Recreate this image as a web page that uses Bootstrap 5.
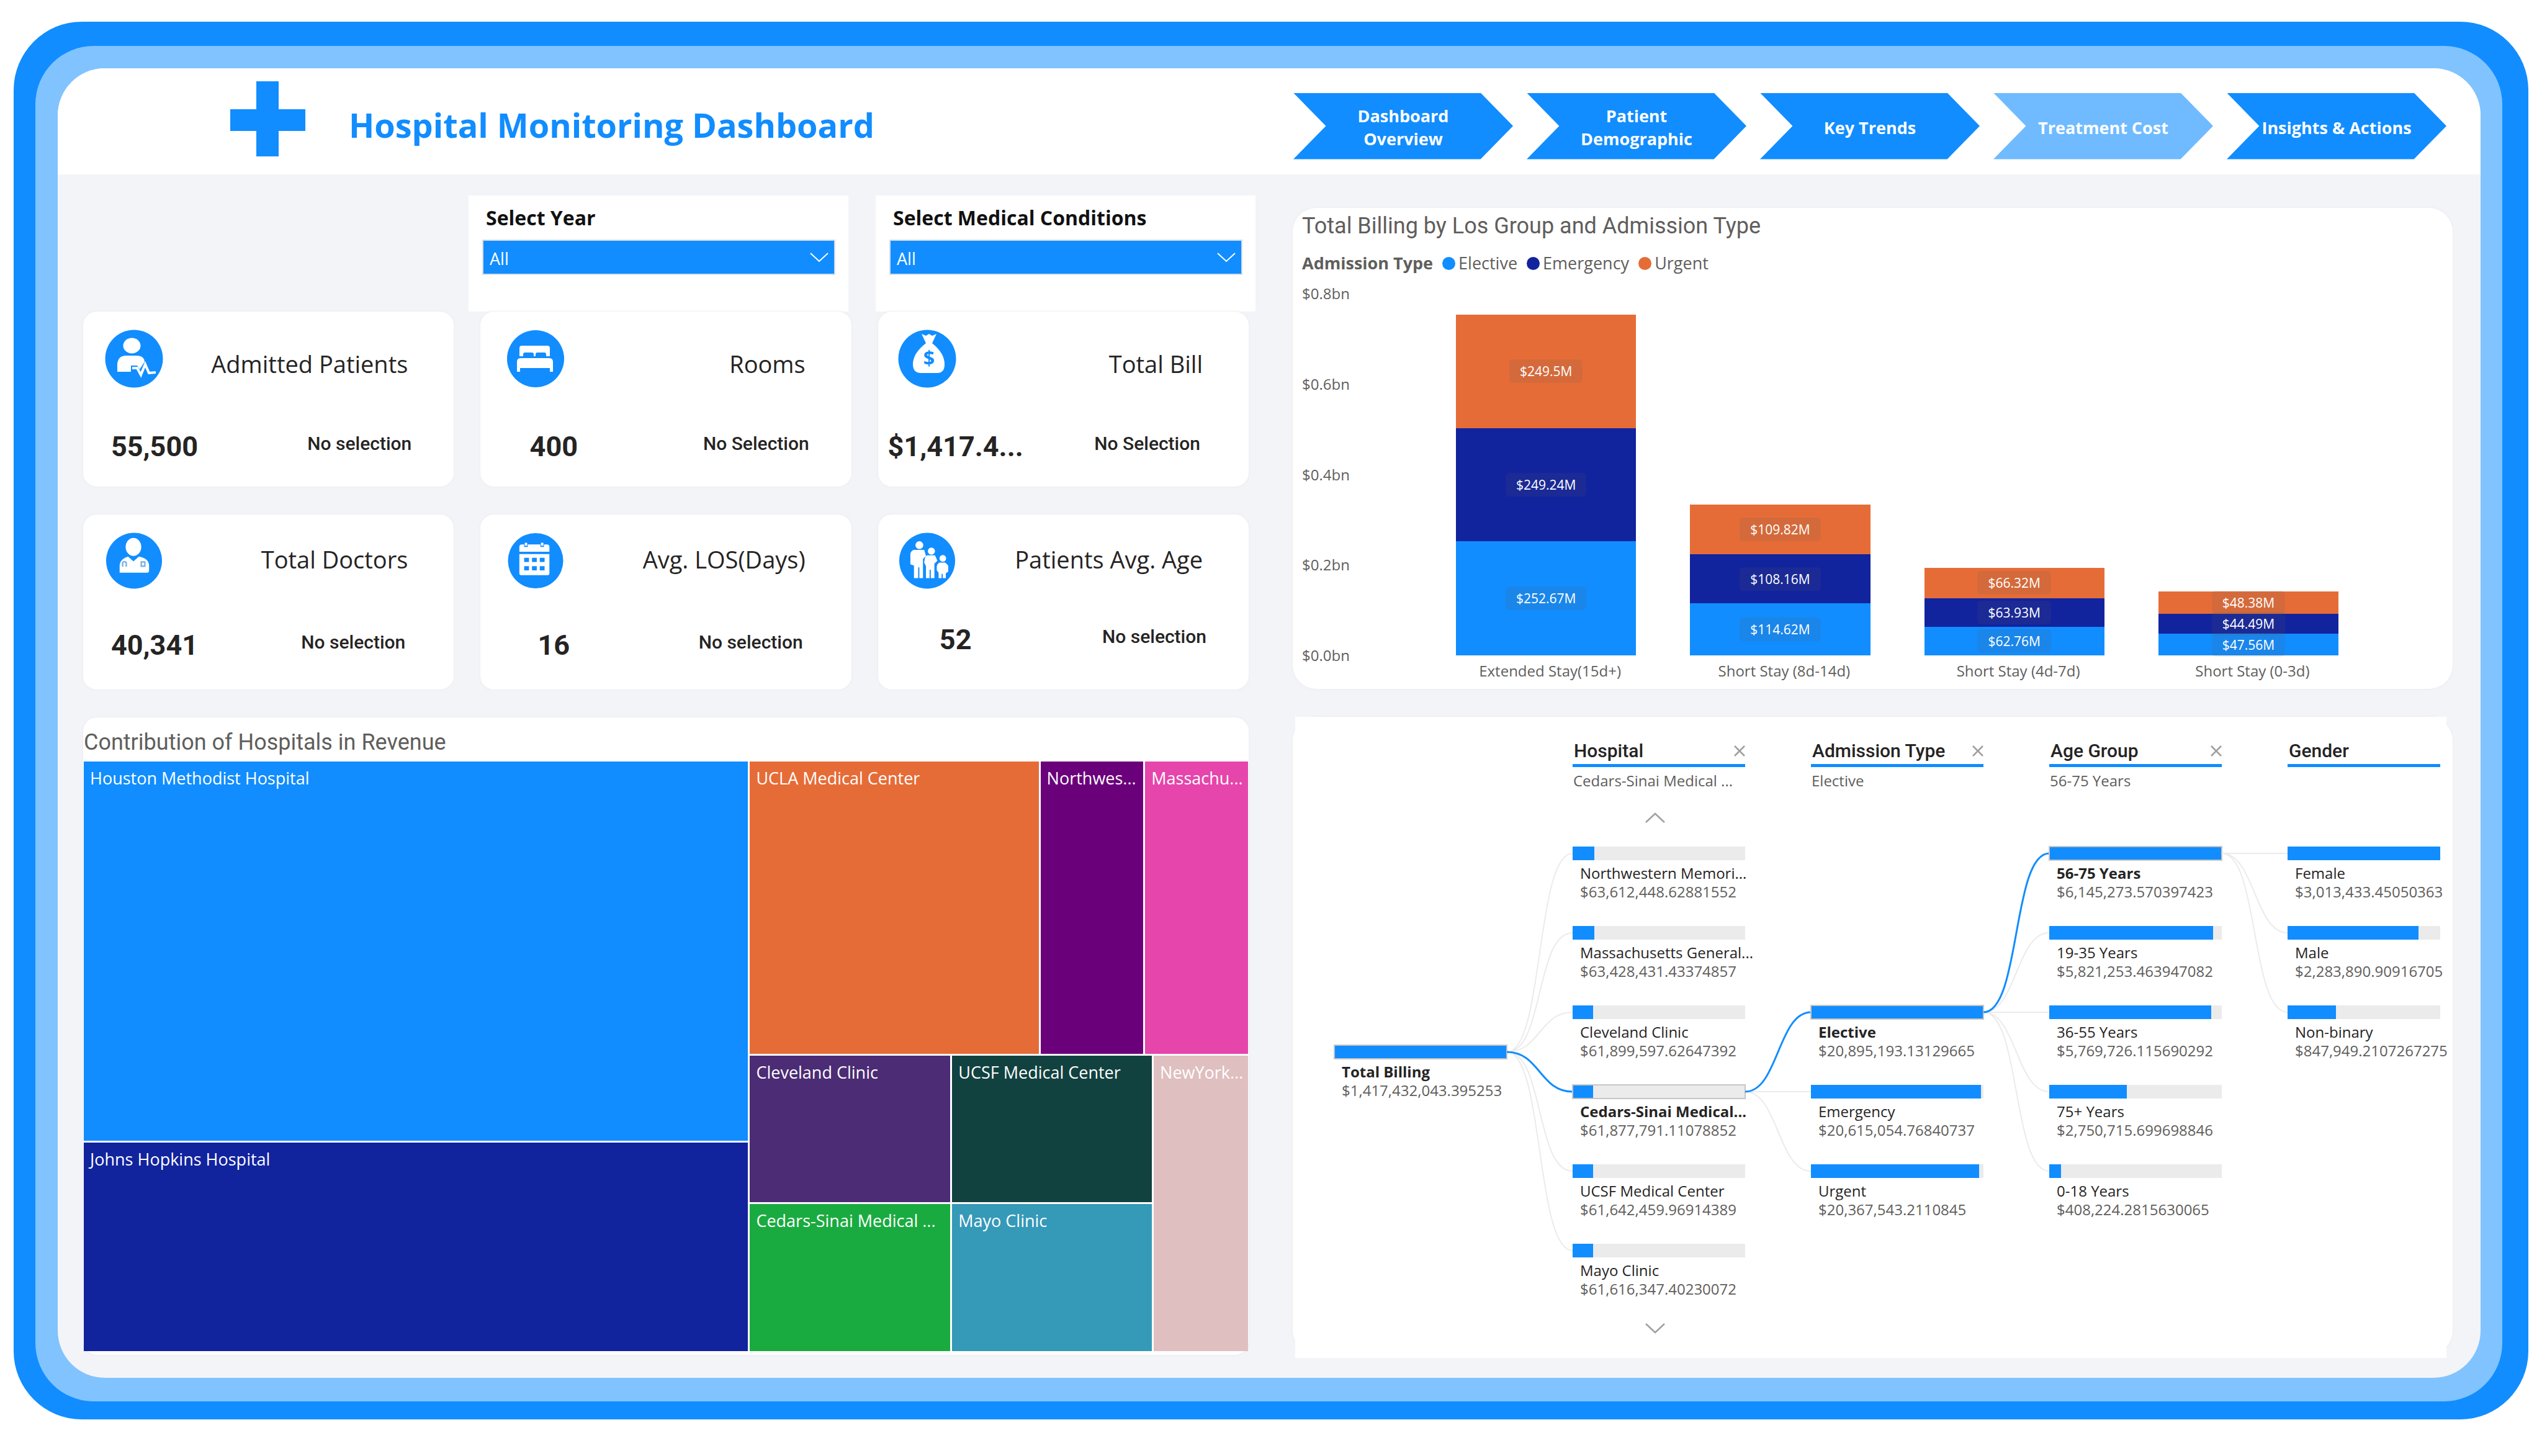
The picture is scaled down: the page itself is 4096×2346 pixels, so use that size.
<!DOCTYPE html>
<html lang="en">
<head>
<meta charset="utf-8">
<meta name="viewport" content="width=device-width, initial-scale=1">
<title>Hospital Monitoring Dashboard</title>
<link href="https://cdn.jsdelivr.net/npm/bootstrap@5.3.0/dist/css/bootstrap.min.css" rel="stylesheet">
<style>
  :root { --blue:#118dff; --sky:#80c3ff; --navy:#12239e; --orange:#e66c37; --page:#f3f4f8; --ink:#252423; --soft:#605e5c; }
  body { font-family:"Open Sans","Noto Sans",sans-serif; color:var(--ink); background:#fff; font-size:24px; line-height:30px; }
  .din { font-family:Roboto,"Noto Sans",sans-serif; }
  .frame-outer { margin:35px 22px 0; padding:39px 42px 29px 35px; border-radius:110px; background:var(--blue); }
  .frame-light { padding:36px 35px 38px 36px; border-radius:94px; background:var(--sky); }
  .frame-page { border-radius:76px; background:var(--page); overflow:hidden; }

  .top-head { height:171px; padding:0 55px 0 278px; }
  .brand-cross { width:121px; height:121px; margin-bottom:9px; }
  .brand-title { margin:10px 0 0 70px; font-size:54px; line-height:64px; font-weight:700; color:var(--blue); }
  .step-nav { gap:22px; margin-top:15px; }
  .step-link { width:354px; height:107px; padding-top:4px; background:var(--blue); color:#fff; font-size:27px; line-height:37px; font-weight:700; white-space:nowrap;
    clip-path:polygon(0 0,85.2% 0,100% 50%,85.2% 100%,0 100%,14.8% 50%); }
  .step-link.current { background:#70bbff; }

  .board { display:grid; grid-template-columns:minmax(0,1878fr) minmax(0,1869fr); column-gap:71px; padding:34px 45px 37px 41px; }
  .filters { gap:44px; margin:0 -11px 0 621px; }
  .filter-box { flex:1; height:187px; padding:14px 21px 0 22px; }
  .filter-box label { display:block; margin-left:6px; font-size:32px; line-height:44px; font-weight:700; color:#111; }
  .filter-box .form-select { height:57px; margin-top:13px; padding:4px 52px 0 10px; border:2px solid #d5dde6; border-radius:0; color:#fff; font-size:27px; line-height:36px; background-color:var(--blue); background-size:30px 16px; background-position:right 9px center;
    --bs-form-select-bg-img:url("data:image/svg+xml,%3Csvg xmlns='http://www.w3.org/2000/svg' viewBox='0 0 30 16'%3E%3Cpath d='M1 1l14 13L29 1' fill='none' stroke='%23fff' stroke-width='2'/%3E%3C/svg%3E"); }

  .kpi-grid { display:grid; grid-template-columns:repeat(3,1fr); gap:45px 43px; }
  .panel { background:#fff; border-radius:22px; box-shadow:0 0 3px 1px #ededf0; }
  .kpi { height:282px; padding-top:29px; --icon-left:35px; --num-box:230px; --note-right:78px; --name-top:31px; --foot-top:67px; }
  .kpi.col-b { --icon-left:42px; --num-box:236px; }
  .kpi.col-c { --icon-left:32px; --num-box:250px; }
  .kpi.note-wide { --note-right:68px; }
  .kpi.row-b { --name-top:19px; --foot-top:60px; }
  .kpi.row-b.raised { --foot-top:51px; }
  .kpi-icon { width:94px; height:94px; margin-left:var(--icon-left); }
  .kpi.row-b .kpi-icon { height:91px; margin-bottom:3px; }
  .kpi-name { margin:var(--name-top) 74px 0 0; font-size:38px; line-height:48px; white-space:nowrap; }
  .kpi-foot { margin-top:var(--foot-top); }
  .kpi-num { width:var(--num-box); text-align:center; font-size:45px; line-height:56px; font-weight:700; white-space:nowrap; }
  .kpi-note { margin:5px var(--note-right) 0 0; font-size:30px; line-height:36px; font-weight:500; }

  .panel-title { font-size:36px; line-height:40px; font-weight:400; color:var(--soft); margin:0; }
  .tree-map { height:1027px; margin-top:45px; padding:20px 1px 6px; }
  .tree-map .panel-title { height:51px; }
  .map-area { height:950px; gap:3px; }
  .map-area .d-flex { gap:3px; min-width:0; min-height:0; }
  .map-tile { overflow:hidden; min-width:0; min-height:0; }
  .map-tile span { display:block; padding:8px 10px; color:#fff; font-size:27px; line-height:38px; white-space:nowrap; }

  .right-side { padding-top:20px; }
  .chart-panel { height:775px; padding:9px 184px 0 15px; border-radius:38px; }
  .legend-row { margin-top:22px; height:36px; font-size:27px; line-height:36px; color:var(--soft); }
  .legend-dot { width:21px; height:21px; margin:0 5px 0 15px; border-radius:50%; }
  .plot { margin-top:15px; color:var(--soft); }
  .plot-axis { flex:0 0 248px; height:615px; line-height:32px; }
  .plot-bars { gap:87px; padding-top:16px; }
  .plot-col { flex:1 1 0; min-width:0; }
  .stack { height:583px; }
  .seg-tag { position:relative; padding:0 17px; border-radius:6px; font-size:21px; line-height:38px; color:#fff; background:rgba(96,94,92,.13); }
  .plot-cat { margin-top:8px; padding-left:13px; line-height:34px; text-align:center; white-space:nowrap; }
  .bg-e { background:var(--blue); } .bg-m { background:var(--navy); } .bg-u { background:var(--orange); }

  .decomp-under { height:1027px; border-radius:38px; margin-top:45px; }
  .decomp { height:1033px; margin:0 10px 0 4px; padding-left:63px; background:#fff; }
  .level { flex:0 0 278px; min-width:0; }
  .level-head { height:209px; padding-top:37px; }
  .level-name { padding:0 0 3px 2px; border-bottom:5px solid var(--blue); font-size:30px; line-height:36px; font-weight:500; }
  .level-pick { margin:7px 0 0 1px; color:var(--soft); white-space:nowrap; }
  .decomp button svg { display:block; fill:none; stroke:#a19f9d; stroke-width:2.5; }
  .close-btn { margin-top:9px; }
  .scroll-btn { width:32px; margin-left:117px; }
  .level-head .scroll-btn { margin-bottom:38px; }
  .node { height:128px; white-space:nowrap; }
  .node-bar { height:22px; background:#ebebeb; }
  .node-bar div { height:100%; background:var(--blue); }
  .node-name { margin:6px 0 0 12px; }
  .node-value { margin-left:12px; color:var(--soft); }
  .node.picked .node-name { font-weight:700; }
  .node.picked .node-bar { outline:2px solid #c8c6c4; outline-offset:-1px; }
  .root-level { padding-top:529px; }
  .links { flex:0 0 106px; height:768px; margin-top:209px; fill:none; stroke:#ebebeb; stroke-width:2; }
  .links .on { stroke:var(--blue); stroke-width:3; }
  .last-level { flex:0 0 246px; min-width:0; }
  .last-level .node-bar { overflow:hidden; }
</style>
</head>
<body>
<div class="frame-outer"><div class="frame-light"><div class="frame-page">

  <header class="top-head bg-white d-flex align-items-center justify-content-between">
    <div class="d-flex align-items-center">
      <svg class="brand-cross" viewBox="0 0 121 121" aria-hidden="true"><path fill="#118dff" d="M42 0h36v45h43v35H78v41H42V80H0V45h42z"/></svg>
      <h1 class="brand-title">Hospital Monitoring Dashboard</h1>
    </div>
    <nav class="step-nav d-flex text-center">
      <a href="#" class="step-link d-flex align-items-center justify-content-center text-decoration-none">Dashboard<br>Overview</a>
      <a href="#" class="step-link d-flex align-items-center justify-content-center text-decoration-none">Patient<br>Demographic</a>
      <a href="#" class="step-link d-flex align-items-center justify-content-center text-decoration-none">Key Trends</a>
      <a href="#" class="step-link current d-flex align-items-center justify-content-center text-decoration-none">Treatment Cost</a>
      <a href="#" class="step-link d-flex align-items-center justify-content-center text-decoration-none">Insights &amp; Actions</a>
    </nav>
  </header>

  <main class="board">
    <section>
      <div class="filters d-flex">
        <div class="filter-box bg-white"><label for="year">Select Year</label><select id="year" class="form-select"><option>All</option></select></div>
        <div class="filter-box bg-white"><label for="cond">Select Medical Conditions</label><select id="cond" class="form-select"><option>All</option></select></div>
      </div>

      <div class="kpi-grid">
        <article class="kpi panel note-wide">
          <div class="d-flex justify-content-between align-items-start">
            <svg class="kpi-icon" viewBox="0 0 94 94" aria-hidden="true"><circle cx="47" cy="47" r="46.500" fill="#118dff"/><g fill="#fff"><ellipse cx="43.500" cy="26" rx="14" ry="12.500"/><path d="M20 68V56q1-14 14-14h18q11 0 12 10l-4 6-4 6-4-6H42v10z"/></g><path d="M44 62h8l6 11 7-17 6 14 11-1" fill="none" stroke="#fff" stroke-width="4"/></svg>
            <div class="kpi-name">Admitted Patients</div>
          </div>
          <div class="kpi-foot d-flex justify-content-between align-items-start din"><div class="kpi-num">55,500</div><div class="kpi-note">No selection</div></div>
        </article>
        <article class="kpi panel col-b note-wide">
          <div class="d-flex justify-content-between align-items-start">
            <svg class="kpi-icon" viewBox="0 0 94 94" aria-hidden="true"><circle cx="47" cy="47" r="46" fill="#118dff"/><path fill="#fff" d="M21 43V30q0-4 4-4h41q4 0 4 4v13h-6v-3q0-3-3-3H50q-3 0-3 3v3h-3v-3q0-3-3-3H30q-3 0-3 3v3zM17 52q0-6 6-6h46q6 0 6 6v16h-5v-6H22v6h-5z"/></svg>
            <div class="kpi-name">Rooms</div>
          </div>
          <div class="kpi-foot d-flex justify-content-between align-items-start din"><div class="kpi-num">400</div><div class="kpi-note">No Selection</div></div>
        </article>
        <article class="kpi panel col-c">
          <div class="d-flex justify-content-between align-items-start">
            <svg class="kpi-icon" viewBox="0 0 94 94" aria-hidden="true"><circle cx="47" cy="47" r="46.500" fill="#118dff"/><path fill="#fff" d="M38 7l7 3 5-3 5 3 7-3-7 15q20 16 20 34 0 14-12 14H37q-13 0-13-14 0-18 21-34z"/><text x="50" y="58" text-anchor="middle" font-family="Open Sans, sans-serif" font-weight="700" font-size="32" fill="#118dff">$</text></svg>
            <div class="kpi-name">Total Bill</div>
          </div>
          <div class="kpi-foot d-flex justify-content-between align-items-start din"><div class="kpi-num">$1,417.4...</div><div class="kpi-note">No Selection</div></div>
        </article>
        <article class="kpi panel row-b">
          <div class="d-flex justify-content-between align-items-start">
            <svg class="kpi-icon" viewBox="0 0 94 94" aria-hidden="true"><circle cx="47" cy="47" r="46.500" fill="#118dff"/><g fill="#fff"><ellipse cx="46" cy="24" rx="13" ry="15"/><path d="M23 67V54q1-10 14-14l9 8 9-8q16 3 17 14v9q0 4-4 4z"/></g><path d="M28 57v-7q3-3 6 0v7M59 49h6v7h-6z" fill="none" stroke="#7fb2e4" stroke-width="2.500"/></svg>
            <div class="kpi-name">Total Doctors</div>
          </div>
          <div class="kpi-foot d-flex justify-content-between align-items-start din"><div class="kpi-num">40,341</div><div class="kpi-note">No selection</div></div>
        </article>
        <article class="kpi panel col-b row-b">
          <div class="d-flex justify-content-between align-items-start">
            <svg class="kpi-icon" viewBox="0 0 94 94" aria-hidden="true"><circle cx="47" cy="47" r="46" fill="#118dff"/><path fill="#fff" d="M20 32V24q0-4 4-4h4v4h6v-4h21v4h6v-4h5q4 0 4 4v8zM20 36h50v32q0 3-3 3H23q-3 0-3-3zM29 17h4v5h-4zM56 17h4v5h-4z"/><path fill="#118dff" d="M28 42h8v7h-8zM41 42h8v7h-8zM54 42h8v7h-8zM28 56h8v7h-8zM41 56h8v7h-8zM54 56h8v7h-8z"/></svg>
            <div class="kpi-name">Avg. LOS(Days)</div>
          </div>
          <div class="kpi-foot d-flex justify-content-between align-items-start din"><div class="kpi-num">16</div><div class="kpi-note">No selection</div></div>
        </article>
        <article class="kpi panel col-c row-b raised note-wide">
          <div class="d-flex justify-content-between align-items-start">
            <svg class="kpi-icon" viewBox="0 0 94 94" aria-hidden="true"><circle cx="47" cy="47" r="46.500" fill="#118dff"/><g fill="#fff"><circle cx="34" cy="21" r="6.500"/><path d="M26 29h16l3 10-5 5v32h-6V58h-2v18h-7V55l-6-2V35q2-6 7-6z"/><circle cx="54" cy="31" r="6"/><path d="M48 38h12l4 9-5 5v24h-6V62h-2v14h-6V56l-3-6 1-6q1-6 5-6z"/><circle cx="73" cy="43" r="5.500"/><path d="M68 50h9l5 5v10l-4 3v8h-5v-7h-2v7h-5v-9l-3-4v-7q1-5 5-6z"/></g></svg>
            <div class="kpi-name">Patients Avg. Age</div>
          </div>
          <div class="kpi-foot d-flex justify-content-between align-items-start din"><div class="kpi-num">52</div><div class="kpi-note">No selection</div></div>
        </article>
      </div>

      <article class="tree-map panel">
        <h2 class="panel-title din">Contribution of Hospitals in Revenue</h2>
        <div class="map-area d-flex">
          <div class="d-flex flex-column" style="flex:1071 1 0">
            <div class="map-tile" style="flex:611 1 0;background:#118dff"><span>Houston Methodist Hospital</span></div>
            <div class="map-tile" style="flex:336 1 0;background:#12239e"><span>Johns Hopkins Hospital</span></div>
          </div>
          <div class="d-flex flex-column" style="flex:803 1 0">
            <div class="d-flex" style="flex:471 1 0">
              <div class="map-tile" style="flex:466 1 0;background:#e66c37"><span>UCLA Medical Center</span></div>
              <div class="map-tile" style="flex:166 1 0;background:#6b007b"><span>Northwes...</span></div>
              <div class="map-tile" style="flex:166 1 0;background:#e645ab"><span>Massachu...</span></div>
            </div>
            <div class="d-flex" style="flex:476 1 0">
              <div class="d-flex flex-column" style="flex:648 1 0">
                <div class="d-flex" style="flex:236 1 0">
                  <div class="map-tile" style="flex:323 1 0;background:#4b2c75"><span>Cleveland Clinic</span></div>
                  <div class="map-tile" style="flex:322 1 0;background:#124240"><span>UCSF Medical Center</span></div>
                </div>
                <div class="d-flex" style="flex:237 1 0">
                  <div class="map-tile" style="flex:323 1 0;background:#1aab40"><span>Cedars-Sinai Medical ...</span></div>
                  <div class="map-tile" style="flex:322 1 0;background:#3599b8"><span>Mayo Clinic</span></div>
                </div>
              </div>
              <div class="map-tile" style="flex:152 1 0;background:#dfbfbf"><span>NewYork...</span></div>
            </div>
          </div>
        </div>
      </article>
    </section>

    <section class="right-side">
      <article class="chart-panel panel">
        <h2 class="panel-title din">Total Billing by Los Group and Admission Type</h2>
        <div class="legend-row d-flex align-items-center">
          <strong>Admission Type</strong>
          <span class="legend-dot bg-e"></span>Elective
          <span class="legend-dot bg-m"></span>Emergency
          <span class="legend-dot bg-u"></span>Urgent
        </div>
        <div class="plot d-flex">
          <div class="plot-axis d-flex flex-column justify-content-between"><span>$0.8bn</span><span>$0.6bn</span><span>$0.4bn</span><span>$0.2bn</span><span>$0.0bn</span></div>
          <div class="plot-bars d-flex flex-fill">
            <div class="plot-col">
              <div class="stack d-flex flex-column justify-content-end">
                <div class="bg-u d-flex align-items-center justify-content-center" style="height:31.4%"><span class="seg-tag">$249.5M</span></div>
                <div class="bg-m d-flex align-items-center justify-content-center" style="height:31.2%"><span class="seg-tag">$249.24M</span></div>
                <div class="bg-e d-flex align-items-center justify-content-center" style="height:31.6%"><span class="seg-tag">$252.67M</span></div>
              </div>
              <div class="plot-cat">Extended Stay(15d+)</div>
            </div>
            <div class="plot-col">
              <div class="stack d-flex flex-column justify-content-end">
                <div class="bg-u d-flex align-items-center justify-content-center" style="height:13.8%"><span class="seg-tag">$109.82M</span></div>
                <div class="bg-m d-flex align-items-center justify-content-center" style="height:13.55%"><span class="seg-tag">$108.16M</span></div>
                <div class="bg-e d-flex align-items-center justify-content-center" style="height:14.33%"><span class="seg-tag">$114.62M</span></div>
              </div>
              <div class="plot-cat">Short Stay (8d-14d)</div>
            </div>
            <div class="plot-col">
              <div class="stack d-flex flex-column justify-content-end">
                <div class="bg-u d-flex align-items-center justify-content-center" style="height:8.4%"><span class="seg-tag">$66.32M</span></div>
                <div class="bg-m d-flex align-items-center justify-content-center" style="height:7.99%"><span class="seg-tag">$63.93M</span></div>
                <div class="bg-e d-flex align-items-center justify-content-center" style="height:7.85%"><span class="seg-tag">$62.76M</span></div>
              </div>
              <div class="plot-cat">Short Stay (4d-7d)</div>
            </div>
            <div class="plot-col">
              <div class="stack d-flex flex-column justify-content-end">
                <div class="bg-u d-flex align-items-center justify-content-center" style="height:6.1%"><span class="seg-tag">$48.38M</span></div>
                <div class="bg-m d-flex align-items-center justify-content-center" style="height:5.6%"><span class="seg-tag">$44.49M</span></div>
                <div class="bg-e d-flex align-items-center justify-content-center" style="height:5.95%"><span class="seg-tag">$47.56M</span></div>
              </div>
              <div class="plot-cat">Short Stay (0-3d)</div>
            </div>
          </div>
        </div>
      </article>

      <article class="decomp-under panel"><div class="decomp d-flex">
        <div class="level root-level">
          <div class="node picked"><div class="node-bar"><div style="width:100%"></div></div><div class="node-name">Total Billing</div><div class="node-value">$1,417,432,043.395253</div></div>
        </div>

        <svg class="links" viewBox="0 0 106 768" aria-hidden="true"><path d="M0 331C60 331 46 11 106 11M0 331C60 331 46 139 106 139M0 331C53 331 53 267 106 267M0 331C60 331 46 523 106 523M0 331C60 331 46 651 106 651"/><path class="on" d="M0 331C53 331 53 395 106 395"/></svg>

        <div class="level">
          <div class="level-head d-flex flex-column">
            <div class="level-name din d-flex justify-content-between align-items-start">Hospital<button class="close-btn border-0 bg-transparent p-0" aria-label="Remove level"><svg width="18" height="18" viewBox="0 0 18 18"><path d="M1 1l16 16M17 1L1 17"/></svg></button></div>
            <div class="level-pick">Cedars-Sinai Medical ...</div>
            <button class="scroll-btn border-0 bg-transparent p-0 mt-auto" aria-label="Scroll up"><svg width="32" height="17" viewBox="0 0 32 17"><path d="M1 16L16 2l15 14"/></svg></button>
          </div>
          <div class="node"><div class="node-bar"><div style="width:12.7%"></div></div><div class="node-name">Northwestern Memori...</div><div class="node-value">$63,612,448.62881552</div></div>
          <div class="node"><div class="node-bar"><div style="width:12.5%"></div></div><div class="node-name">Massachusetts General...</div><div class="node-value">$63,428,431.43374857</div></div>
          <div class="node"><div class="node-bar"><div style="width:12%"></div></div><div class="node-name">Cleveland Clinic</div><div class="node-value">$61,899,597.62647392</div></div>
          <div class="node picked"><div class="node-bar"><div style="width:12%"></div></div><div class="node-name">Cedars-Sinai Medical...</div><div class="node-value">$61,877,791.11078852</div></div>
          <div class="node"><div class="node-bar"><div style="width:12%"></div></div><div class="node-name">UCSF Medical Center</div><div class="node-value">$61,642,459.96914389</div></div>
          <div class="node"><div class="node-bar"><div style="width:12%"></div></div><div class="node-name">Mayo Clinic</div><div class="node-value">$61,616,347.40230072</div></div>
          <button class="scroll-btn border-0 bg-transparent p-0 d-block" aria-label="Scroll down"><svg width="32" height="17" viewBox="0 0 32 17"><path d="M1 1l15 14L31 1"/></svg></button>
        </div>

        <svg class="links" viewBox="0 0 106 768" aria-hidden="true"><path d="M0 395H106M0 395C53 395 53 523 106 523"/><path class="on" d="M0 395C53 395 53 267 106 267"/></svg>

        <div class="level">
          <div class="level-head">
            <div class="level-name din d-flex justify-content-between align-items-start">Admission Type<button class="close-btn border-0 bg-transparent p-0" aria-label="Remove level"><svg width="18" height="18" viewBox="0 0 18 18"><path d="M1 1l16 16M17 1L1 17"/></svg></button></div>
            <div class="level-pick">Elective</div>
          </div>
          <div class="node"></div>
          <div class="node"></div>
          <div class="node picked"><div class="node-bar"><div style="width:100%"></div></div><div class="node-name">Elective</div><div class="node-value">$20,895,193.13129665</div></div>
          <div class="node"><div class="node-bar"><div style="width:98.6%"></div></div><div class="node-name">Emergency</div><div class="node-value">$20,615,054.76840737</div></div>
          <div class="node"><div class="node-bar"><div style="width:97.5%"></div></div><div class="node-name">Urgent</div><div class="node-value">$20,367,543.2110845</div></div>
        </div>

        <svg class="links" viewBox="0 0 106 768" aria-hidden="true"><path d="M0 267C53 267 53 139 106 139M0 267H106M0 267C53 267 53 395 106 395M0 267C60 267 46 523 106 523"/><path class="on" d="M0 267C60 267 46 11 106 11"/></svg>

        <div class="level">
          <div class="level-head">
            <div class="level-name din d-flex justify-content-between align-items-start">Age Group<button class="close-btn border-0 bg-transparent p-0" aria-label="Remove level"><svg width="18" height="18" viewBox="0 0 18 18"><path d="M1 1l16 16M17 1L1 17"/></svg></button></div>
            <div class="level-pick">56-75 Years</div>
          </div>
          <div class="node picked"><div class="node-bar"><div style="width:100%"></div></div><div class="node-name">56-75 Years</div><div class="node-value">$6,145,273.570397423</div></div>
          <div class="node"><div class="node-bar"><div style="width:94.8%"></div></div><div class="node-name">19-35 Years</div><div class="node-value">$5,821,253.463947082</div></div>
          <div class="node"><div class="node-bar"><div style="width:93.9%"></div></div><div class="node-name">36-55 Years</div><div class="node-value">$5,769,726.115690292</div></div>
          <div class="node"><div class="node-bar"><div style="width:45%"></div></div><div class="node-name">75+ Years</div><div class="node-value">$2,750,715.699698846</div></div>
          <div class="node"><div class="node-bar"><div style="width:7%"></div></div><div class="node-name">0-18 Years</div><div class="node-value">$408,224.2815630065</div></div>
        </div>

        <svg class="links" viewBox="0 0 106 768" aria-hidden="true"><path d="M0 11H106M0 11C53 11 53 139 106 139M0 11C60 11 46 267 106 267"/></svg>

        <div class="last-level">
          <div class="level-head">
            <div class="level-name din">Gender</div>
          </div>
          <div class="node"><div class="node-bar"><div style="width:100%"></div></div><div class="node-name">Female</div><div class="node-value">$3,013,433.45050363</div></div>
          <div class="node"><div class="node-bar"><div style="width:85.6%"></div></div><div class="node-name">Male</div><div class="node-value">$2,283,890.90916705</div></div>
          <div class="node"><div class="node-bar"><div style="width:31.8%"></div></div><div class="node-name">Non-binary</div><div class="node-value">$847,949.2107267275</div></div>
        </div>
      </div></article>
    </section>
  </main>
</div></div></div>
<script src="https://cdn.jsdelivr.net/npm/bootstrap@5.3.0/dist/js/bootstrap.bundle.min.js"></script>
</body>
</html>
